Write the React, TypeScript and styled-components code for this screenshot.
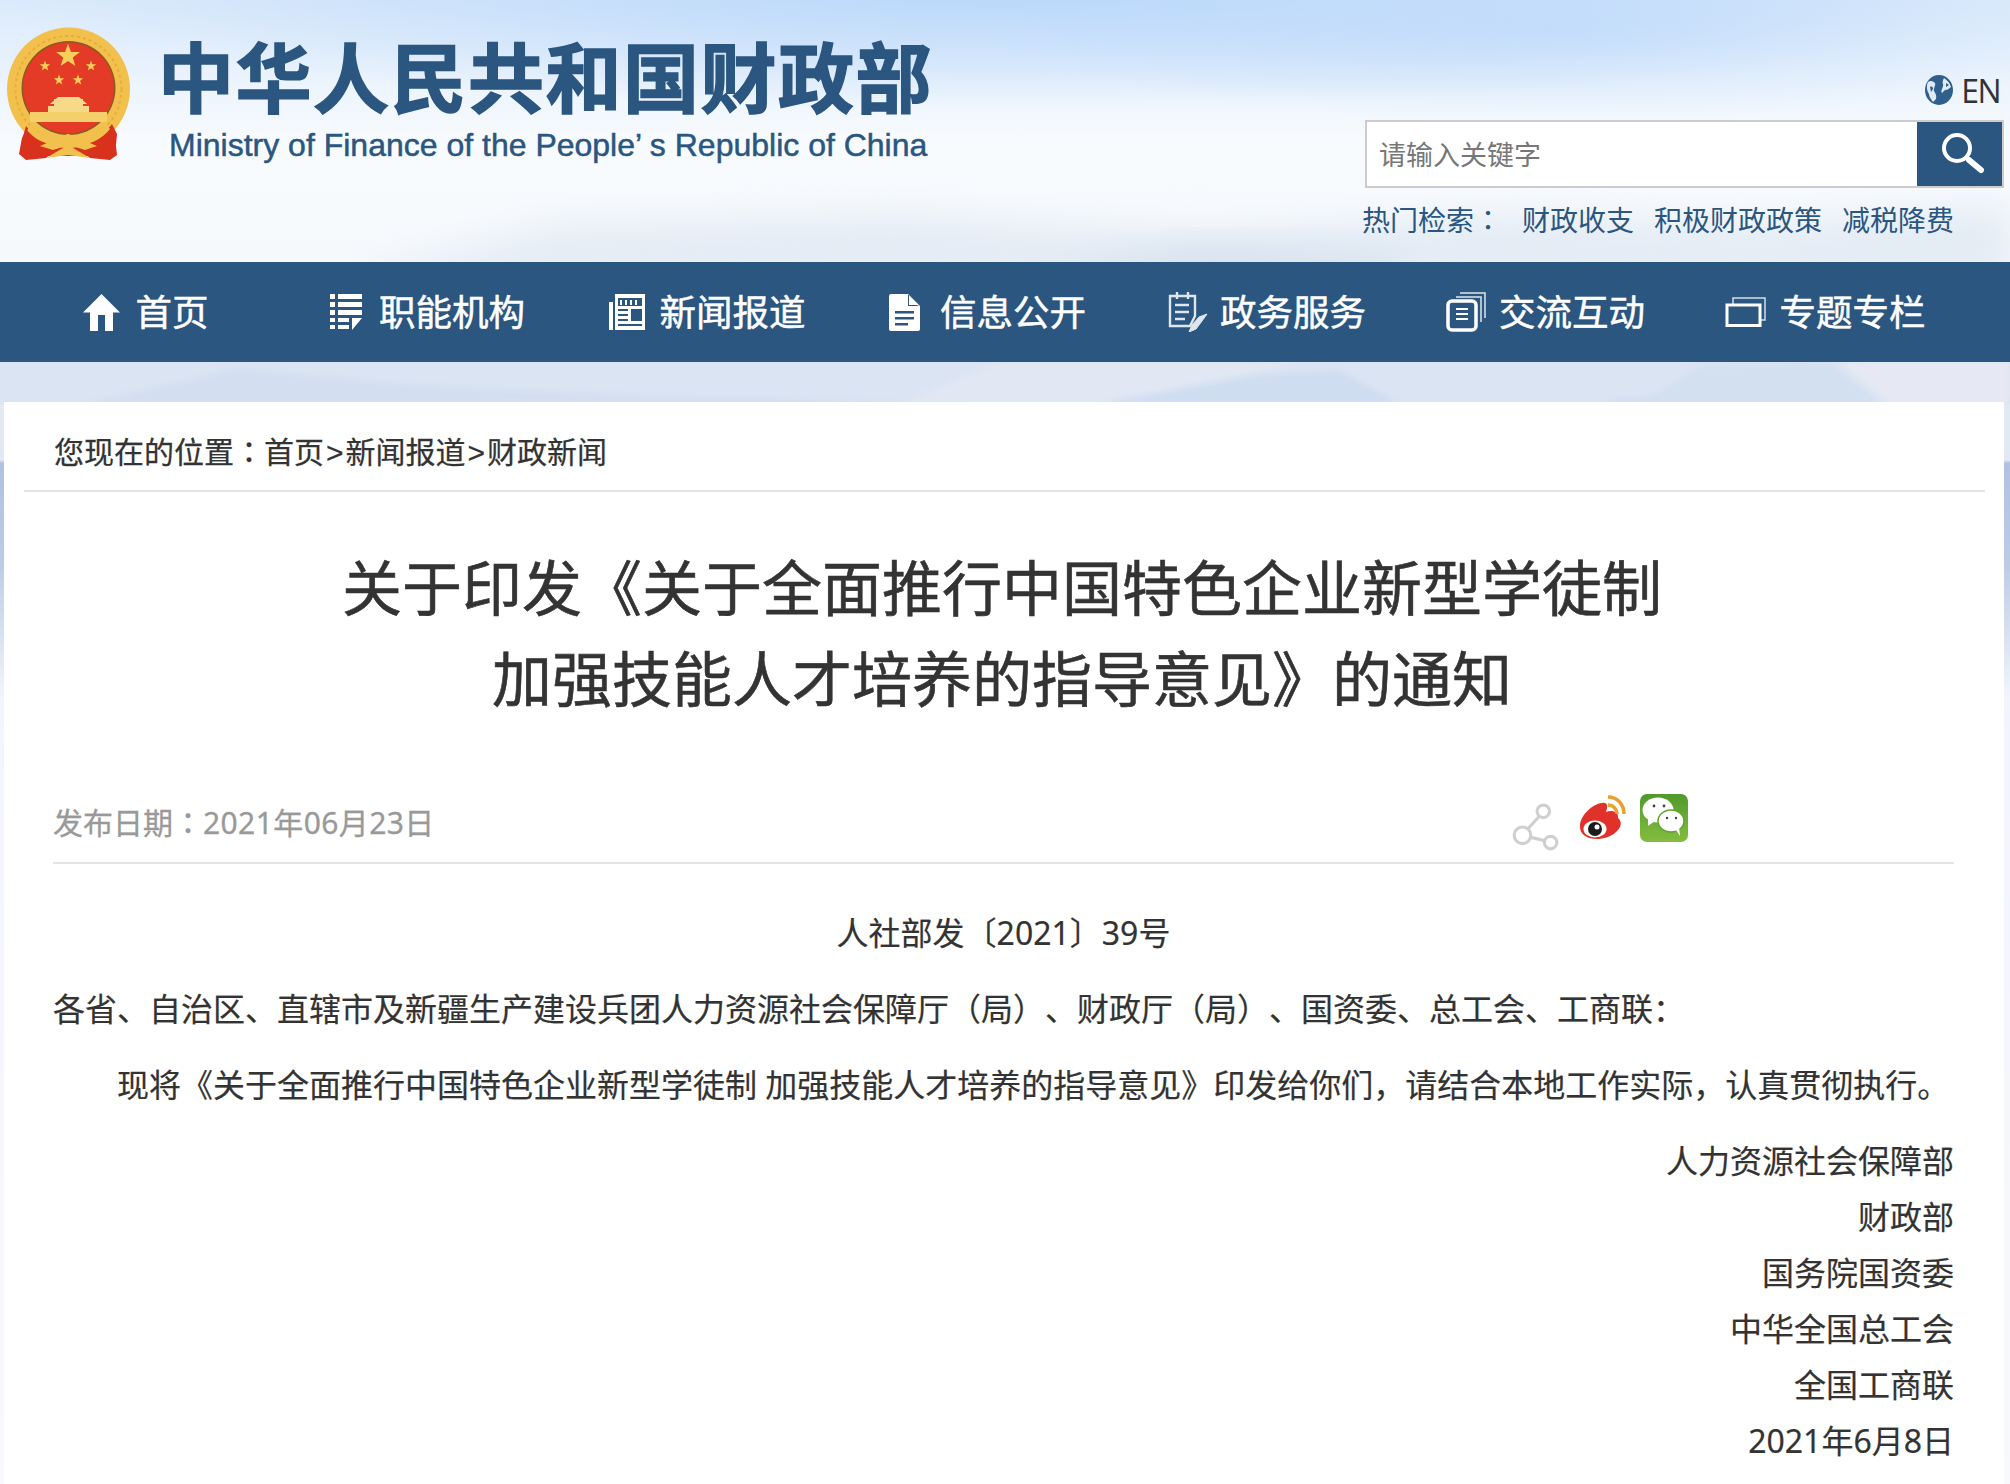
import React from 'react';
import styled, { createGlobalStyle } from 'styled-components';

const BLUE = '#2a5680';
const CJK = '"Liberation Sans", "Noto Sans CJK SC", sans-serif';
const BODY = '"Noto Sans", "Noto Sans CJK SC", sans-serif';

const GlobalStyle = createGlobalStyle`
    html, body {
        margin: 0;
        padding: 0;
        background: #fff;
    }
    * {
        box-sizing: border-box;
    }
`;

const Page = styled.div`
    position: relative;
    width: 2010px;
    height: 1484px;
    overflow: hidden;
    font-family: ${CJK};
    color: #333;
    text-spacing-trim: space-all;
`;

const Backdrop = styled.svg`
    position: absolute;
    top: 0;
    left: 0;
`;

const Content = styled.div`
    position: relative;
    display: flex;
    flex-direction: column;
    height: 100%;
`;

const Header = styled.header`
    display: flex;
    height: 262px;
    padding-right: 6px;
`;

const Emblem = styled.svg`
    flex: none;
`;

const Brand = styled.div`
    margin-left: 18px;
    padding-top: 32px;
`;

const BrandName = styled.div`
    font-family: "Noto Sans CJK SC", sans-serif;
    font-weight: 700;
    font-size: 76px;
    line-height: 84px;
    letter-spacing: 1.5px;
    color: ${BLUE};
    -webkit-text-stroke: 1.5px ${BLUE};
    white-space: nowrap;
`;

const BrandEnglish = styled.div`
    margin: 11px 0 0 11px;
    font-family: "Liberation Sans", sans-serif;
    font-size: 32px;
    line-height: 36px;
    color: ${BLUE};
    -webkit-text-stroke: 0.5px ${BLUE};
    white-space: nowrap;
`;

const Tools = styled.div`
    margin-left: auto;
    width: 639px;
    padding-top: 72px;
`;

const LangRow = styled.div`
    display: flex;
    justify-content: flex-end;
    align-items: center;
    gap: 8px;
    height: 36px;
    margin-bottom: 12px;
    padding-right: 4px;
    font-family: "Open Sans", sans-serif;
    font-size: 32px;
    letter-spacing: -1.5px;
    color: #333;
`;

const SearchBox = styled.div`
    display: flex;
    height: 68px;
    border: 2px solid #ccc;
    background: #fff;
`;

const SearchField = styled.div`
    flex: 1;
    padding-left: 12px;
    font-size: 27px;
    line-height: 69px;
    color: #777;
`;

const SearchButton = styled.div`
    display: flex;
    align-items: center;
    justify-content: center;
    width: 85px;
    padding-left: 6px;
    background: ${BLUE};
`;

const HotRow = styled.div`
    display: flex;
    gap: 20px;
    margin: 14px 0 0 -3px;
    font-size: 28px;
    line-height: 40px;
    color: ${BLUE};
    white-space: nowrap;
`;

// the full-width colon sits centred in the reference, as it does in the TC forms
const FullColon = styled.span.attrs({ lang: 'zh-TW' })`
    font-family: "Noto Sans CJK TC", sans-serif;
    line-height: 0;
`;

const Nav = styled.nav`
    display: grid;
    grid-template-columns: repeat(7, 280px);
    height: 100px;
    padding-left: 5px;
    background: ${BLUE};
`;

const NavItem = styled.div<{ $gap: number; $shift: number }>`
    display: flex;
    align-items: center;
    justify-content: center;
    gap: ${(p) => p.$gap}px;
    padding-left: ${(p) => p.$shift}px;
    color: #fff;
`;

const NavLabel = styled.span`
    margin-bottom: 4px;
    font-size: 36.5px;
    -webkit-text-stroke: 0.5px #fff;
`;

const Card = styled.main`
    flex: 1;
    margin: 40px 6px 0 4px;
    background: #fff;
`;

const Crumbs = styled.div`
    height: 90px;
    margin: 0 19px 0 20px;
    padding: 26px 0 0 30px;
    border-bottom: 2px solid #e4e4e4;
    font-size: 30px;
    line-height: 50px;
    color: #333;
    -webkit-text-stroke: 0.25px #333;
`;

const CrumbSep = styled.span`
    padding: 0 2px;
`;

const Title = styled.h1`
    margin: 53px 0 0;
    padding-right: 4px;
    font-weight: 400;
    font-size: 60px;
    line-height: 91px;
    text-align: center;
    color: #333;
    -webkit-text-stroke: 0.6px #333;
`;

const Meta = styled.div`
    display: flex;
    justify-content: space-between;
    height: 66px;
    margin: 71px 50px 0 49px;
    padding-right: 266px;
    border-bottom: 2px solid #e4e4e4;
`;

const PubDate = styled.div`
    font-family: ${BODY};
    font-size: 30px;
    line-height: 50px;
    color: #999;
    -webkit-text-stroke: 0.3px #999;
`;

const DateValue = styled.span`
    letter-spacing: 0.4px;
`;

const ShareIcons = styled.div`
    display: flex;
    align-items: flex-start;
    gap: 14px;
    margin-top: -4px;
`;

const ShareLink = styled.svg`
    margin: 9px 4px 0 0;
`;

const Article = styled.article`
    margin: 0 50px 0 49px;
    padding-top: 31px;
    font-family: ${BODY};
    font-size: 32px;
    color: #333;
    -webkit-text-stroke: 0.2px #333;
`;

const Line = styled.p<{ $align?: string; $indent?: boolean }>`
    margin: 0;
    line-height: 76px;
    text-align: ${(p) => p.$align || 'left'};
    text-indent: ${(p) => (p.$indent ? '2em' : '0')};
    white-space: nowrap;
`;

const Signature = styled.div`
    margin-top: 10px;
    line-height: 56px;
    text-align: right;
`;

const HomeIcon = () => (
    <svg width="37" height="37" viewBox="0 0 37 37">
        <path fill="#fff" d="M18.5 0 37 18.5h-7V37h-8V21h-7v16H7V18.5H0Z" />
    </svg>
);

const ListIcon = () => (
    <svg width="32" height="36" viewBox="0 0 32 36" fill="#fff">
        <path d="M0 0h5v5H0zM8 0h24v5H8zM0 8h5v5H0zM8 8h24v5H8zM0 16h5v5H0zM8 16h24v5H8zM0 24h5v4H0zM8 24h11v4H8zM0 31h5v4H0zM8 31h11v4H8z" />
        <path d="M22 24h10l-10 12z" />
    </svg>
);

const NewsIcon = () => (
    <svg width="36" height="36" viewBox="0 0 36 36">
        <path fill="#fff" d="M0 8h4v28H0zM6 0h30v36H6z" />
        <path fill={BLUE} d="M9 4h24v8H9zM9 15h10v2H9zM9 20h10v2H9zM9 25h10v2H9zM9 30h24v2H9z" />
        <path fill="#fff" d="M11 6h2v5h-2zM16 6h2v5h-2zM21 6h2v5h-2zM26 6h2v5h-2z" />
        <path fill={BLUE} d="M22 15h11v12H22z" />
    </svg>
);

const DocIcon = () => (
    <svg width="31" height="37" viewBox="0 0 31 37">
        <path fill="#fff" d="M2 0h17l12 12v23a2 2 0 0 1-2 2H2a2 2 0 0 1-2-2V2a2 2 0 0 1 2-2Z" />
        <path fill={BLUE} d="M6 17h19v2.500H6zM6 23h19v2.500H6zM6 29h13v2.500H6zM20 1v10h10l-2 1H19V1z" />
    </svg>
);

const ServiceIcon = () => (
    <svg width="40" height="40" viewBox="0 0 40 40" fill="none" stroke="#dfe6ee" strokeWidth="2.400">
        <path d="M2 4h25v20l-5 10H2z" />
        <path d="M9 0v7M20 0v7M7 13h14M7 20h14M7 27h10" />
        <path fill="#dfe6ee" strokeWidth="1" d="M39 22 31 25 24 33l-3 7 7-3 6-8z" />
    </svg>
);

const ExchangeIcon = () => (
    <svg width="40" height="40" viewBox="0 0 40 40" fill="none" stroke="#fff">
        <path strokeWidth="1.500" opacity="0.85" d="M14 1h25v25M10 5h25v25" />
        <rect x="2" y="9" width="28" height="29" rx="4" strokeWidth="3.500" />
        <path strokeWidth="2.200" d="M10 17h12M10 22h12M10 27h12" />
    </svg>
);

const SpecialIcon = () => (
    <svg width="41" height="30" viewBox="0 0 41 30" fill="none" stroke="#fff">
        <path strokeWidth="1.500" opacity="0.8" d="M8 7V1h32v22h-5" />
        <rect x="2" y="8" width="33" height="20.500" strokeWidth="3" />
    </svg>
);

const Globe = () => (
    <svg width="28" height="30" viewBox="0 0 28 30">
        <ellipse cx="14" cy="15" rx="14" ry="15" fill="#2f5f8c" />
        <path fill="#dfe9f3" d="M3 7c3-2 5-1 7 1 1 3-2 5-1 8 1 2 3 4 2 8l-3 3c-2-3-4-5-4-8-2-3-3-8-1-12ZM19 3c3 2 6 5 7 9l-4 3c-3-1-3 2-5 3-2-3 2-6 1-9-1-2 0-4 1-6Z" />
        <path fill="#2f5f8c" d="M5 12c2-1 3 0 3 2l-2 3zM21 8l3 2-3 2z" />
    </svg>
);

const SearchGlyph = () => (
    <svg width="46" height="44" viewBox="0 0 46 44" fill="none" stroke="#fff" strokeLinecap="round">
        <circle cx="17" cy="16" r="13" strokeWidth="4" />
        <path strokeWidth="6" d="M29 28 41 38" />
    </svg>
);

const ShareIcon = () => (
    <ShareLink width="48" height="50" viewBox="0 0 46 48" fill="none" stroke="#cfcfcf" strokeWidth="3">
        <circle cx="10" cy="31" r="8" />
        <circle cx="30" cy="8" r="6" />
        <circle cx="37" cy="38" r="6" />
        <path d="M15 25 26 13M18 33l13 3" />
    </ShareLink>
);

const WeiboIcon = () => (
    <svg width="48" height="48" viewBox="0 0 48 48">
        <path fill="#e0322a" d="M2 32C2 22 14 10 24 9c6-1 6 4 4 9 5-2 13-1 12 6 4 3 4 9-2 14-8 8-24 9-31 4-4-3-5-6-5-10Z" />
        <ellipse cx="17" cy="35" rx="11.500" ry="8.500" fill="#fff" />
        <circle cx="17" cy="35" r="7" fill="#1c1c1c" />
        <circle cx="19" cy="33" r="2.500" fill="#fff" />
        <path fill="none" stroke="#e8a02e" strokeWidth="3.500" d="M30 3c9 0 16 7 16 17M30 11c5 0 9 4 9 9" />
    </svg>
);

const WechatIcon = () => (
    <svg width="48" height="48" viewBox="0 0 48 48">
        <defs>
            <linearGradient id="wechatFill" x1="0" y1="0" x2="0" y2="1">
                <stop offset="0" stopColor="#4f9a2b" />
                <stop offset="1" stopColor="#84bd3f" />
            </linearGradient>
        </defs>
        <rect width="48" height="48" rx="7" fill="url(#wechatFill)" />
        <ellipse cx="18" cy="16" rx="15.500" ry="12.500" fill="#fff" />
        <path fill="#fff" d="M8 24v8l7-5z" />
        <ellipse cx="31" cy="27" rx="13" ry="11" fill="#fff" stroke="#5fa32f" strokeWidth="1.500" />
        <path fill="#fff" d="M36 36l4 6-1-9z" />
        <g fill="#444">
            <circle cx="14" cy="12" r="1.400" />
            <circle cx="24" cy="12" r="1.400" />
            <circle cx="27" cy="24" r="1.200" />
            <circle cx="36" cy="24" r="1.200" />
        </g>
    </svg>
);

const star = (cx: number, cy: number, r: number) => {
    const pts: string[] = [];
    for (let i = 0; i < 10; i++) {
        const a = -Math.PI / 2 + (i * Math.PI) / 5;
        const d = i % 2 === 0 ? r : r * 0.4;
        pts.push(`${(cx + d * Math.cos(a)).toFixed(1)},${(cy + d * Math.sin(a)).toFixed(1)}`);
    }
    return pts.join(' ');
};

const NationalEmblem = () => (
    <Emblem width="140" height="170" viewBox="0 0 140 170">
        <defs>
            <filter id="soft"><feGaussianBlur stdDeviation="0.5" /></filter>
        </defs>
        <g filter="url(#soft)">
            <path fill="#d8301f" d="M30 122 22 138l-3 16 7 6 20-2 12-10zM107 122l8 16 2 17-7 5-20-2-12-10z" />
            <circle cx="68.500" cy="89" r="61.500" fill="#f2c14e" />
            <circle cx="68.500" cy="89" r="53" fill="none" stroke="#e8ad35" strokeWidth="2" strokeDasharray="3 3" />
            <circle cx="68.500" cy="88" r="47" fill="#8a5a22" />
            <circle cx="68.500" cy="88" r="45.500" fill="#e33b25" />
            <path fill="#f5cf6a" d="M30 112h77v10H30z" />
            <path fill="#f7d98a" d="M48 106h41v6H48zM54 99h29v7H54z" />
            <path fill="#f7d98a" d="M50 104 58 97h21l8 7z" />
            <path fill="#d8301f" d="M26 126C38 142 54 148 68 148 84 148 100 140 112 124l5 10-2 22H24l-4-2 2-14z" />
            <path fill="#f2c14e" d="M32 126C42 138 55 140 68 134 82 140 95 138 106 124l4 5C98 144 80 148 68 140 56 148 38 144 27 130z" />
            <path fill="#f2c14e" d="M40 146 68 134l29 12-12 4-16-5-16 5zM46 158l22-13 22 13-22-3z" />
            <polygon points={star(68, 56, 12.500)} fill="#f6cf58" />
            <polygon points={star(45, 66, 5.500)} fill="#f6cf58" />
            <polygon points={star(91, 66, 5.500)} fill="#f6cf58" />
            <polygon points={star(59, 80, 5.500)} fill="#f6cf58" />
            <polygon points={star(78, 80, 5.500)} fill="#f6cf58" />
        </g>
    </Emblem>
);

const navItems = [
    { label: '首页', gap: 16, shift: 1, icon: <HomeIcon /> },
    { label: '职能机构', gap: 17, shift: 5, icon: <ListIcon /> },
    { label: '新闻报道', gap: 15, shift: 4, icon: <NewsIcon /> },
    { label: '信息公开', gap: 20, shift: 5, icon: <DocIcon /> },
    { label: '政务服务', gap: 12, shift: 4, icon: <ServiceIcon /> },
    { label: '交流互动', gap: 13, shift: 1, icon: <ExchangeIcon /> },
    { label: '专题专栏', gap: 14, shift: 0, icon: <SpecialIcon /> },
];

const signers = ['人力资源社会保障部', '财政部', '国务院国资委', '中华全国总工会', '全国工商联', '2021年6月8日'];

export default function App() {
    return (
        <Page lang="zh-CN">
            <GlobalStyle />
            <Backdrop width="2010" height="1484" viewBox="0 0 2010 1484" aria-hidden="true">
                <defs>
                    <linearGradient id="pageSide" x1="0" y1="0" x2="0" y2="1484" gradientUnits="userSpaceOnUse">
                        <stop offset="0.27" stopColor="#e2e8f4" />
                        <stop offset="0.31" stopColor="#e2e8f4" />
                        <stop offset="0.312" stopColor="#b0c1e2" />
                        <stop offset="0.38" stopColor="#bccbe5" />
                        <stop offset="0.47" stopColor="#f2f5fb" />
                        <stop offset="1" stopColor="#f8f9fc" />
                    </linearGradient>
                    <linearGradient id="headSky" x1="0" y1="0" x2="0" y2="262" gradientUnits="userSpaceOnUse">
                        <stop offset="0" stopColor="#dbeafb" />
                        <stop offset="0.55" stopColor="#f8fbfe" />
                        <stop offset="1" stopColor="#f6f9fc" />
                    </linearGradient>
                    <radialGradient id="skyGlow">
                        <stop offset="0" stopColor="#b9d7fa" />
                        <stop offset="1" stopColor="#b9d7fa" stopOpacity="0" />
                    </radialGradient>
                    <filter id="haze" x="-20%" y="-50%" width="140%" height="200%"><feGaussianBlur stdDeviation="18" /></filter>
                    <filter id="ridge" x="-10%" y="-50%" width="120%" height="200%"><feGaussianBlur stdDeviation="3" /></filter>
                </defs>
                <rect width="2010" height="262" fill="url(#headSky)" />
                <ellipse cx="1000" cy="-10" rx="1000" ry="120" fill="url(#skyGlow)" />
                <ellipse cx="1550" cy="30" rx="560" ry="90" fill="url(#skyGlow)" opacity="0.6" />
                <path filter="url(#haze)" fill="#e3ebf4" d="M340 280 560 225 900 215 1200 235 1500 215 1760 225 2010 205V280Z" />
                <path filter="url(#haze)" fill="#d4dfee" d="M1010 280 1200 245 1400 260V280Z" />
                <rect y="362" width="2010" height="1122" fill="url(#pageSide)" />
                <rect y="362" width="2010" height="42" fill="#dbe4f3" />
                <path filter="url(#ridge)" fill="#d3dff0" d="M80 404 240 368 420 385 640 395 1000 404Z" />
                <path filter="url(#ridge)" fill="#e2e8f3" d="M1000 362H1300L1100 404H900Z" />
                <path filter="url(#ridge)" fill="#cfddf1" d="M1100 404 1260 375 1340 370 1400 404ZM1600 404 1620 398 1740 398 1850 404Z" />
                <path filter="url(#ridge)" fill="#d3e0f0" d="M1640 404 1700 366 1830 362 1880 404Z" />
                <path filter="url(#ridge)" fill="#e6e9f3" d="M1840 362H2010V404H1890Z" />
            </Backdrop>
            <Content>
                <Header>
                    <NationalEmblem />
                    <Brand>
                        <BrandName>中华人民共和国财政部</BrandName>
                        <BrandEnglish>Ministry of Finance of the People’ s Republic of China</BrandEnglish>
                    </Brand>
                    <Tools>
                        <LangRow>
                            <Globe />
                            EN
                        </LangRow>
                        <SearchBox>
                            <SearchField>请输入关键字</SearchField>
                            <SearchButton>
                                <SearchGlyph />
                            </SearchButton>
                        </SearchBox>
                        <HotRow>
                            <span>热门检索<FullColon>：</FullColon></span>
                            <span>财政收支</span>
                            <span>积极财政政策</span>
                            <span>减税降费</span>
                        </HotRow>
                    </Tools>
                </Header>
                <Nav>
                    {navItems.map((item) => (
                        <NavItem key={item.label} $gap={item.gap} $shift={item.shift}>
                            {item.icon}
                            <NavLabel>{item.label}</NavLabel>
                        </NavItem>
                    ))}
                </Nav>
                <Card>
                    <Crumbs>
                        您现在的位置<FullColon>：</FullColon>首页<CrumbSep>&gt;</CrumbSep>新闻报道<CrumbSep>&gt;</CrumbSep>财政新闻
                    </Crumbs>
                    <Title>
                        关于印发《关于全面推行中国特色企业新型学徒制
                        <br />
                        加强技能人才培养的指导意见》的通知
                    </Title>
                    <Meta>
                        <PubDate>发布日期<FullColon>：</FullColon><DateValue>2021年06月23日</DateValue></PubDate>
                        <ShareIcons>
                            <ShareIcon />
                            <WeiboIcon />
                            <WechatIcon />
                        </ShareIcons>
                    </Meta>
                    <Article>
                        <Line $align="center">人社部发〔2021〕39号</Line>
                        <Line>各省、自治区、直辖市及新疆生产建设兵团人力资源社会保障厅（局）、财政厅（局）、国资委、总工会、工商联：</Line>
                        <Line $indent>现将《关于全面推行中国特色企业新型学徒制 加强技能人才培养的指导意见》印发给你们，请结合本地工作实际，认真贯彻执行。</Line>
                        <Signature>
                            {signers.map((name) => (
                                <div key={name}>{name}</div>
                            ))}
                        </Signature>
                    </Article>
                </Card>
            </Content>
        </Page>
    );
}
